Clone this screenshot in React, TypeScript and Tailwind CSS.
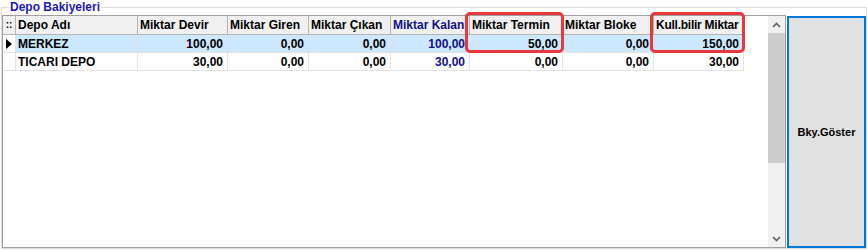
import React from "react";

type Col = { key: string; title: string; w: string; align: "left" | "right"; blue?: boolean; tight?: boolean };

const cols: Col[] = [
  { key: "ad", title: "Depo Adı", w: "w-[122px]", align: "left" },
  { key: "devir", title: "Miktar Devir", w: "w-[90px]", align: "right" },
  { key: "giren", title: "Miktar Giren", w: "w-[81px]", align: "right" },
  { key: "cikan", title: "Miktar Çıkan", w: "w-[82px]", align: "right" },
  { key: "kalan", title: "Miktar Kalan", w: "w-[79px]", align: "right", blue: true },
  { key: "termin", title: "Miktar Termin", w: "w-[93px]", align: "right" },
  { key: "bloke", title: "Miktar Bloke", w: "w-[91px]", align: "right" },
  { key: "kull", title: "Kull.bilir Miktar", w: "w-[90px]", align: "right", tight: true },
];

const rows: Record<string, string>[] = [
  { ad: "MERKEZ", devir: "100,00", giren: "0,00", cikan: "0,00", kalan: "100,00", termin: "50,00", bloke: "0,00", kull: "150,00" },
  { ad: "TICARI DEPO", devir: "30,00", giren: "0,00", cikan: "0,00", kalan: "30,00", termin: "0,00", bloke: "0,00", kull: "30,00" },
];

export default function App() {
  return (
    <div className="relative w-[867px] h-[250px] pt-[7px] bg-white font-['Liberation_Sans',Arial,sans-serif] text-black">
      <div className="ml-[1px] w-[866px] h-[242px] border border-[#dcdcdc] flex gap-[1px] pt-[7px]">
        {/* Grid */}
        <div className="w-[784px] h-[233px] border border-[#a0a0a0] flex">
          <div className="flex-1 flex flex-col">
            {/* header */}
            <div className="flex h-[19px]">
              <div className="w-[13px] h-full bg-[#f0f0f0] border-r border-b border-[#b4b4b4] flex items-center justify-center text-[10px] font-bold leading-none">
                ::
              </div>
              {cols.map((c) => (
                <div
                  key={c.key}
                  className={`${c.w} h-full bg-[#f0f0f0] border-r border-b border-[#b4b4b4] flex items-center pl-[2px] text-[12px] font-bold whitespace-nowrap overflow-hidden ${c.tight ? "tracking-[-0.25px]" : ""} ${c.blue ? "text-[#10108a]" : "text-black"}`}
                >
                  {c.title}
                </div>
              ))}
            </div>
            {rows.map((r, i) => (
              <div key={i} className="flex h-[18px]">
                <div className="w-[13px] h-full bg-white border-r border-b border-[#e3e3e3] flex items-center pl-[3px]">
                  {i === 0 && (
                    <svg width="6" height="10" viewBox="0 0 6 10">
                      <polygon points="0,0 6,5 0,10" fill="#000" />
                    </svg>
                  )}
                </div>
                {cols.map((c) => (
                  <div
                    key={c.key}
                    className={`${c.w} h-full border-r border-b border-[#e3e3e3] flex items-center text-[12px] font-bold whitespace-nowrap ${i === 0 ? "bg-[#cce8ff]" : "bg-white"} ${c.align === "right" ? "justify-end pr-[4px]" : "pl-[2px]"} ${c.blue ? "text-[#10108a]" : "text-black"}`}
                  >
                    {r[c.key]}
                  </div>
                ))}
              </div>
            ))}
          </div>
          {/* scrollbar */}
          <div className="w-[17px] h-full bg-[#f0f0f0] flex flex-col">
            <div className="h-[17px] flex items-center justify-center">
              <svg width="9" height="6" viewBox="0 0 9 6">
                <polyline points="1,5 4.5,1.5 8,5" fill="none" stroke="#606060" strokeWidth="1.6" />
              </svg>
            </div>
            <div className="h-[130px] bg-[#cdcdcd]" />
            <div className="flex-1" />
            <div className="h-[17px] flex items-center justify-center">
              <svg width="9" height="6" viewBox="0 0 9 6">
                <polyline points="1,1 4.5,4.5 8,1" fill="none" stroke="#606060" strokeWidth="1.6" />
              </svg>
            </div>
          </div>
        </div>
        {/* Button */}
        <div className="mt-[1px] w-[79px] h-[232px] border-2 border-[#0078d7] bg-[#e1e1e1] flex items-center justify-center text-[11px] font-bold text-black">
          Bky.Göster
        </div>
      </div>

      {/* Group box caption */}
      <div className="absolute left-[9px] top-0 h-[14px] px-[1px] bg-white flex items-center text-[12px] font-bold text-[#1a1ab4] leading-none">
        Depo Bakiyeleri
      </div>

      {/* Annotation boxes */}
      <div className="absolute left-[465px] top-[12px] w-[99px] h-[41px] border-[3px] border-[#e8383d] rounded-[5px]" />
      <div className="absolute left-[650px] top-[12px] w-[95px] h-[41px] border-[3px] border-[#e8383d] rounded-[5px]" />
    </div>
  );
}
